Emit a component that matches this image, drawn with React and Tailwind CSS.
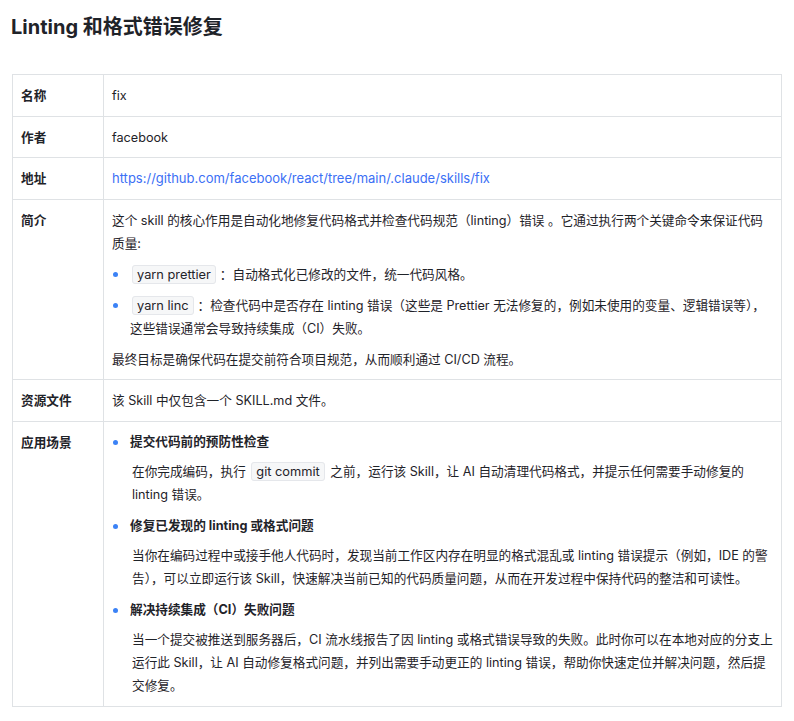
const FONT = 'font-["Inter","Noto_Sans_CJK_SC",sans-serif]';

function Code({ children }) {
  return (
    <code className='mx-[2px] rounded-[3px] border border-[#e5e7eb] bg-[#f6f7f8] px-[4px] py-[1px] font-["Inter","Noto_Sans_CJK_SC",sans-serif] text-[12.8px]'>
      {children}
    </code>
  );
}

function Row({ label, children }) {
  return (
    <tr>
      <th className="w-[91px] border border-[#dfe2e5] px-[8px] pb-[8.5px] pt-[9px] text-left align-top font-bold">{label}</th>
      <td className="border border-[#dfe2e5] px-[8px] pb-[8.5px] pt-[9px] align-top">{children}</td>
    </tr>
  );
}

function Bullet({ children, className = "" }) {
  return (
    <li className={`relative pl-[18px] ${className}`}>
      <span className="absolute left-[1px] top-[9px] h-[5px] w-[5px] rounded-full bg-[#3b82f6]" />
      {children}
    </li>
  );
}

function Scenario({ title, children }) {
  return (
    <Bullet className="mb-[8px] leading-[22.7px] last:mb-0">
      <p className="font-bold">{title}</p>
      <p className="mt-[8px] pl-[2px]">{children}</p>
    </Bullet>
  );
}

export default function App() {
  return (
    <div className={`${FONT} min-h-[721px] bg-white px-[11px] text-[12.65px] leading-[23px] text-[#1f2329]`}>
      <h1 className="pt-[12px] text-[20px] font-bold leading-[30px]">Linting 和格式错误修复</h1>
      <table className="ml-[1px] mt-[32px] w-[770px] table-fixed border-collapse">
        <tbody>
          <Row label="名称">fix</Row>
          <Row label="作者">facebook</Row>
          <Row label="地址">
            <a className="text-[13px] text-[#3b6ff5]" href="#">https://github.com/facebook/react/tree/main/.claude/skills/fix</a>
          </Row>
          <Row label="简介">
            <p>这个 skill 的核心作用是自动化地修复代码格式并检查代码规范（linting）错误 。它通过执行两个关键命令来保证代码质量:</p>
            <ul className="mt-[8px]">
              <Bullet className="mb-[8px]">
                <Code>yarn prettier</Code><span className="ml-[2px]">：自动格式化已修改的文件，统一代码风格。</span>
              </Bullet>
              <Bullet>
                <Code>yarn linc</Code><span className="ml-[2px]">：检查代码中是否存在 linting 错误（这些是 Prettier 无法修复的，例如未使用的变量、逻辑错误等），这些错误通常会导致持续集成（CI）失败。</span>
              </Bullet>
            </ul>
            <p className="mt-[8px]">最终目标是确保代码在提交前符合项目规范，从而顺利通过 CI/CD 流程。</p>
          </Row>
          <Row label="资源文件">该 Skill 中仅包含一个 SKILL.md 文件。</Row>
          <Row label="应用场景">
            <ul>
              <Scenario title="提交代码前的预防性检查">
                在你完成编码，执行 <Code>git commit</Code> 之前，运行该 Skill，让 AI 自动清理代码格式，并提示任何需要手动修复的 linting 错误。
              </Scenario>
              <Scenario title="修复已发现的 linting 或格式问题">
                当你在编码过程中或接手他人代码时，发现当前工作区内存在明显的格式混乱或 linting 错误提示（例如，IDE 的警告），可以立即运行该 Skill，快速解决当前已知的代码质量问题，从而在开发过程中保持代码的整洁和可读性。
              </Scenario>
              <Scenario title="解决持续集成（CI）失败问题">
                当一个提交被推送到服务器后，CI 流水线报告了因 linting 或格式错误导致的失败。此时你可以在本地对应的分支上运行此 Skill，让 AI 自动修复格式问题，并列出需要手动更正的 linting 错误，帮助你快速定位并解决问题，然后提交修复。
              </Scenario>
            </ul>
          </Row>
        </tbody>
      </table>
    </div>
  );
}
